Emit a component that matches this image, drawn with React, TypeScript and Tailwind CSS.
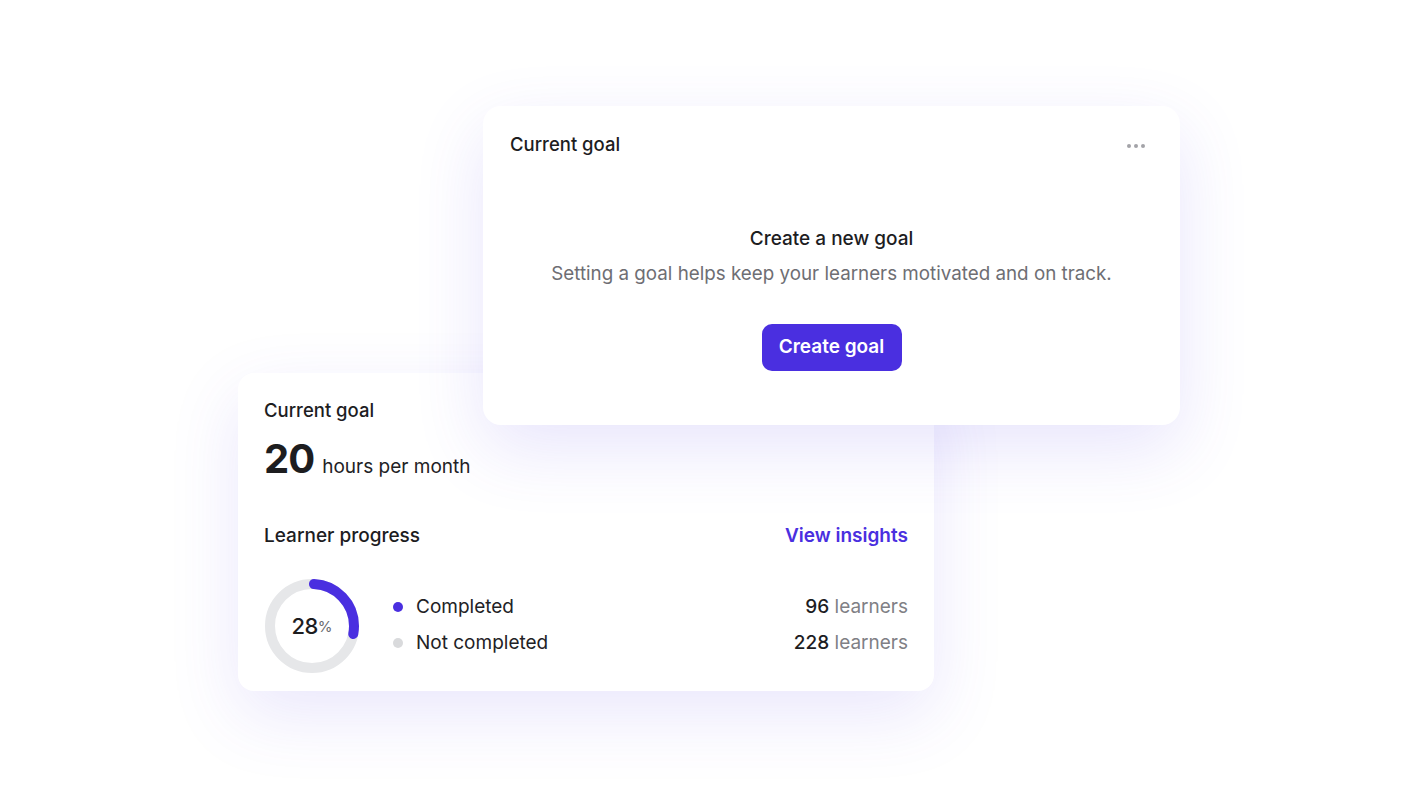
import React from 'react';

const font = { fontFamily: 'Inter, "Noto Sans", sans-serif' };

function Donut({ percent }: { percent: number }) {
  const r = 42;
  const c = 2 * Math.PI * r;
  const len = (percent / 100) * c;
  return (
    <div className="relative w-[96px] h-[96px] shrink-0">
      <svg width="96" height="96" viewBox="0 0 96 96" className="-rotate-90">
        <circle cx="48" cy="48" r={r} fill="none" stroke="#e6e7e9" strokeWidth="10" />
        <circle
          cx="48"
          cy="48"
          r={r}
          fill="none"
          stroke="#4a2fe0"
          strokeWidth="10"
          strokeLinecap="round"
          strokeDasharray={`${len - 2} ${c}`}
          strokeDashoffset={-2}
        />
      </svg>
      <div className="absolute inset-0 flex items-center justify-center pt-[1px]">
        <span className="text-[22px] font-medium text-[#1d1d1f] tracking-[-0.5px]">28</span>
        <span className="text-[15px] text-[#6b6b70] mt-[3px]">%</span>
      </div>
    </div>
  );
}

function LegendRow({ dot, label, count }: { dot: string; label: string; count: string }) {
  return (
    <div className="flex items-center h-[36px]">
      <span className={`w-[10px] h-[10px] rounded-full ${dot}`} />
      <span className="ml-[13px] text-[19px] text-[#222225]">{label}</span>
      <span className="ml-auto text-[19px]">
        <span className="font-medium text-[#1d1d1f]">{count}</span>
        <span className="text-[#808085]"> learners</span>
      </span>
    </div>
  );
}

function ProgressCard() {
  return (
    <div className="absolute left-[238px] top-[373px] w-[696px] h-[318px] bg-white rounded-[16px] shadow-[0_24px_70px_rgba(90,70,235,0.13)] px-[26px] pt-[25px]">
      <div className="text-[18.5px] font-medium text-[#1d1d1f] leading-[24px]">Current goal</div>
      <div className="flex items-baseline mt-[13px]">
        <span className="text-[40px] font-bold text-[#1d1d1f] tracking-[-1px] leading-[48px]">20</span>
        <span className="ml-[8px] text-[19px] text-[#222225]">hours per month</span>
      </div>
      <div className="flex items-center justify-between mt-[39px]">
        <span className="text-[19px] font-medium text-[#1d1d1f]">Learner progress</span>
        <span className="text-[19px] font-semibold text-[#4a2fe0]">View insights</span>
      </div>
      <div className="flex items-center mt-[27px]">
        <Donut percent={28} />
        <div className="flex-1 ml-[33px] -mt-[1px]">
          <LegendRow dot="bg-[#4a2fe0]" label="Completed" count="96" />
          <LegendRow dot="bg-[#d9dadc]" label="Not completed" count="228" />
        </div>
      </div>
    </div>
  );
}

function GoalCard() {
  return (
    <div className="absolute left-[483px] top-[106px] w-[697px] h-[319px] bg-white rounded-[18px] shadow-[0_24px_70px_rgba(90,70,235,0.14)] px-[27px] pt-[26px] flex flex-col">
      <div className="flex items-center justify-between">
        <span className="text-[18.5px] font-medium text-[#1d1d1f] leading-[24px]">Current goal</span>
        <span className="flex gap-[3px] mr-[8px] mt-[3px]">
          <span className="w-[4px] h-[4px] rounded-full bg-[#a3a3a8]" />
          <span className="w-[4px] h-[4px] rounded-full bg-[#a3a3a8]" />
          <span className="w-[4px] h-[4px] rounded-full bg-[#a3a3a8]" />
        </span>
      </div>
      <div className="flex flex-col items-center mt-[70px]">
        <span className="text-[19px] font-medium text-[#1d1d1f] leading-[26px]">Create a new goal</span>
        <span className="mt-[9px] text-[18.8px] text-[#6e6e73] leading-[26px]">
          Setting a goal helps keep your learners motivated and on track.
        </span>
        <button
          type="button"
          className="mt-[37px] w-[140px] h-[47px] rounded-[10px] bg-[#4a2fe0] text-white text-[19px] font-semibold"
        >
          Create goal
        </button>
      </div>
    </div>
  );
}

export default function App() {
  return (
    <div className="relative w-[1418px] h-[798px] bg-white overflow-hidden" style={font}>
      <ProgressCard />
      <GoalCard />
    </div>
  );
}
